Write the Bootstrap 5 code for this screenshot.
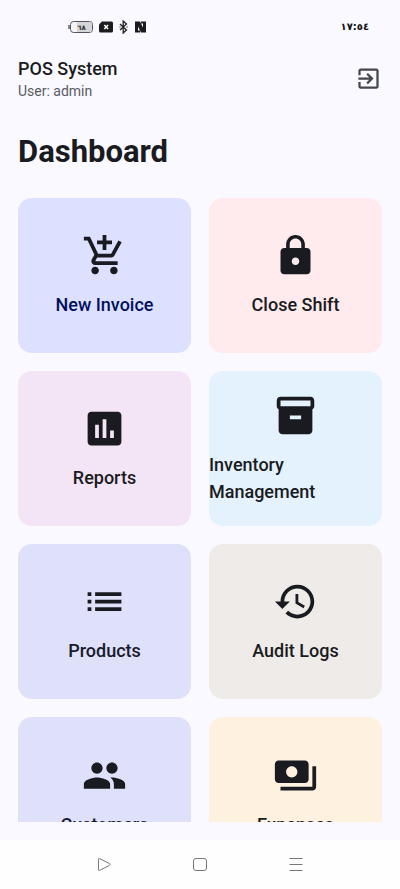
<!DOCTYPE html>
<html lang="en">
<head>
<meta charset="utf-8">
<meta name="viewport" content="width=device-width, initial-scale=1">
<title>POS System</title>
<link href="https://cdn.jsdelivr.net/npm/bootstrap@5.3.0/dist/css/bootstrap.min.css" rel="stylesheet">
<style>
  body { background: #f9f9ff; color: #1a1b21; font-family: Roboto, "Noto Sans", sans-serif; }
  .status-bar { padding: 20px 31px 0 68px; height: 33px; }
  .clock { font: 700 10px/14px "DejaVu Sans", sans-serif; color: #111; }
  .top-bar { padding: 23px 18px 0; }
  .brand { font-size: 18px; line-height: 26px; font-weight: 500; }
  .user-line { font-size: 14px; line-height: 18px; color: #5a5b62; }
  .exit-btn { color: #44464f; line-height: 0; }
  .page-title { font-size: 31px; line-height: 40px; font-weight: 700; padding: 32px 18px 26px; }
  .tile-scroll { min-height: 0; overflow-y: auto; scrollbar-width: none; margin: 0 18px 18px; }
  .tile-scroll::-webkit-scrollbar { display: none; }
  .tile-grid { gap: 18px; grid-template-columns: 1fr 1fr; }
  .tile { aspect-ratio: 1.115; border-radius: 14px; gap: 13px; color: #1a1b21; min-width: 0; }
  .tile svg { width: 45px; height: 45px; flex: none; }
  .tile-label { font-size: 18px; line-height: 27px; font-weight: 500; }
  .bg-indigo-soft { background: #dde0ff; }
  .bg-indigo-soft .tile-label { color: #00105c; }
  .bg-red-soft { background: #ffebee; }
  .bg-purple-soft { background: #f3e5f5; }
  .bg-blue-soft { background: #e3f2fd; }
  .bg-lavender { background: #dfe0f9; }
  .bg-lavender .tile-label { color: #181a2c; }
  .bg-stone { background: #efebe9; }
  .bg-orange-soft { background: #fff1df; }
  .nav-keys { height: 49px; padding: 0 14%; background: #fefefe; color: #77787c; }
  .nav-keys button { color: inherit; line-height: 0; }
</style>
</head>
<body class="vh-100 d-flex flex-column overflow-hidden">

<div class="status-bar d-flex justify-content-between align-items-center flex-shrink-0">
  <div class="d-flex align-items-center">
    <svg width="80" height="14" viewBox="0 0 80 14" role="img" aria-label="Battery 68 percent, no SIM, Bluetooth, NFC">
      <rect x="2.5" y="1.5" width="22" height="11" rx="3" fill="#f4f4f8" stroke="#55565b"/>
      <path d="M9 2h13a2 2 0 0 1 2 2v6a2 2 0 0 1-2 2H9z" fill="#d5d5da"/>
      <path d="M1 5v4" stroke="#55565b" stroke-width="1.4"/>
      <text x="13.5" y="9.500" text-anchor="middle" font-family="DejaVu Sans" font-size="7" font-weight="700" fill="#333">٦٨</text>
      <path d="M34 1.500h9.500q1.500 0 1.500 1.500v8q0 1.500-1.500 1.500h-11q-1.500 0-1.500-1.500V4.500z" fill="#1c1c1f"/>
      <path d="M36.300 5l3.800 4m0-4l-3.800 4" stroke="#fff" stroke-width="1.500"/>
      <path d="M52 4l6.500 6L55.200 13V1l3.300 3L52 10" fill="none" stroke="#222" stroke-width="1.300"/>
      <path d="M51.500 7h1M58.500 7h1.200" stroke="#222" stroke-width="1.200"/>
      <path d="M67 1.500h5l3 6V3.500h-2v-2h5v11h-5l-3-6v4h2v2h-5z" fill="#1c1c1f"/>
    </svg>
  </div>
  <div class="clock" dir="ltr">١٧:٥٤</div>
</div>

<header class="top-bar d-flex justify-content-between align-items-center flex-shrink-0">
  <div>
    <div class="brand">POS System</div>
    <div class="user-line">User: admin</div>
  </div>
  <button type="button" class="exit-btn btn p-0 border-0" aria-label="Log out">
    <svg width="27" height="27" viewBox="0 0 24 24" fill="currentColor"><path d="M10.090 15.590L11.500 17l5-5-5-5-1.410 1.410L12.670 11H3v2h9.670l-2.580 2.590zM19 3H5c-1.110 0-2 .9-2 2v4h2V5h14v14H5v-4H3v4c0 1.100.89 2 2 2h14c1.100 0 2-.9 2-2V5c0-1.100-.9-2-2-2z"/></svg>
  </button>
</header>

<h1 class="page-title m-0 flex-shrink-0">Dashboard</h1>

<main class="tile-scroll flex-grow-1">
  <div class="tile-grid d-grid">
    <button type="button" class="tile bg-indigo-soft border-0 p-0 d-flex flex-column align-items-center justify-content-center">
      <svg viewBox="0 0 24 24" fill="currentColor" aria-hidden="true"><path d="M11 9h2V6h3V4h-3V1h-2v3H8v2h3v3zm-4 9c-1.100 0-1.990.9-1.990 2S5.900 22 7 22s2-.9 2-2-.9-2-2-2zm10 0c-1.100 0-1.990.9-1.990 2s.89 2 1.990 2 2-.9 2-2-.9-2-2-2zm-9.830-3.250l.03-.12.9-1.630h7.450c.75 0 1.410-.41 1.750-1.030l3.860-7.010L19.420 4h-.01l-1.100 2-2.760 5H8.530l-.13-.27L6.160 6l-.95-2-.94-2H1v2h2l3.600 7.590-1.350 2.450c-.16.28-.25.61-.25.96 0 1.100.9 2 2 2h12v-2H7.420c-.13 0-.25-.11-.25-.25z"/></svg>
      <span class="tile-label text-start">New Invoice</span>
    </button>
    <button type="button" class="tile bg-red-soft border-0 p-0 d-flex flex-column align-items-center justify-content-center">
      <svg viewBox="0 0 24 24" fill="currentColor" aria-hidden="true"><path d="M18 8h-1V6c0-2.760-2.240-5-5-5S7 3.240 7 6v2H6c-1.100 0-2 .9-2 2v10c0 1.100.9 2 2 2h12c1.100 0 2-.9 2-2V10c0-1.100-.9-2-2-2zm-6 9c-1.100 0-2-.9-2-2s.9-2 2-2 2 .9 2 2-.9 2-2 2zm3.100-9H8.900V6c0-1.710 1.390-3.100 3.100-3.100 1.710 0 3.100 1.390 3.100 3.100v2z"/></svg>
      <span class="tile-label text-start">Close Shift</span>
    </button>
    <button type="button" class="tile bg-purple-soft border-0 p-0 d-flex flex-column align-items-center justify-content-center">
      <svg viewBox="0 0 24 24" fill="currentColor" aria-hidden="true"><path d="M19 3H5c-1.100 0-2 .9-2 2v14c0 1.100.9 2 2 2h14c1.100 0 2-.9 2-2V5c0-1.100-.9-2-2-2zM9 17H7v-7h2v7zm4 0h-2V7h2v10zm4 0h-2v-4h2v4z"/></svg>
      <span class="tile-label text-start">Reports</span>
    </button>
    <button type="button" class="tile bg-blue-soft border-0 p-0 d-flex flex-column align-items-center justify-content-center">
      <svg viewBox="0 0 24 24" fill="currentColor" aria-hidden="true"><path d="M20 2H4c-1 0-2 .9-2 2v3.010c0 .72.43 1.340 1 1.690V20c0 1.100 1.100 2 2 2h14c.9 0 2-.9 2-2V8.700c.57-.35 1-.97 1-1.690V4c0-1.100-1-2-2-2zm-5 12H9v-2h6v2zm5-7H4V4h16v3z"/></svg>
      <span class="tile-label text-start">Inventory Management</span>
    </button>
    <button type="button" class="tile bg-lavender border-0 p-0 d-flex flex-column align-items-center justify-content-center">
      <svg viewBox="0 0 24 24" fill="currentColor" aria-hidden="true"><path d="M3 13h2v-2H3v2zm0 4h2v-2H3v2zm0-8h2V7H3v2zm4 4h14v-2H7v2zm0 4h14v-2H7v2zM7 7v2h14V7H7z"/></svg>
      <span class="tile-label text-start">Products</span>
    </button>
    <button type="button" class="tile bg-stone border-0 p-0 d-flex flex-column align-items-center justify-content-center">
      <svg viewBox="0 0 24 24" fill="currentColor" aria-hidden="true"><path d="M13 3c-4.970 0-9 4.030-9 9H1l3.890 3.890.07.14L9 12H6c0-3.870 3.130-7 7-7s7 3.130 7 7-3.130 7-7 7c-1.930 0-3.680-.79-4.940-2.060l-1.420 1.420C8.270 19.990 10.510 21 13 21c4.970 0 9-4.030 9-9s-4.030-9-9-9zm-1 5v5l4.280 2.540.72-1.210-3.500-2.080V8H12z"/></svg>
      <span class="tile-label text-start">Audit Logs</span>
    </button>
    <button type="button" class="tile bg-lavender border-0 p-0 d-flex flex-column align-items-center justify-content-center">
      <svg viewBox="0 0 24 24" fill="currentColor" aria-hidden="true"><path d="M16 11c1.660 0 2.990-1.340 2.990-3S17.660 5 16 5c-1.660 0-3 1.340-3 3s1.340 3 3 3zm-8 0c1.660 0 2.990-1.340 2.990-3S9.660 5 8 5C6.340 5 5 6.340 5 8s1.340 3 3 3zm0 2c-2.330 0-7 1.170-7 3.500V19h14v-2.500c0-2.330-4.670-3.500-7-3.500zm8 0c-.29 0-.62.02-.97.05 1.160.84 1.970 1.970 1.970 3.450V19h6v-2.500c0-2.330-4.670-3.500-7-3.500z"/></svg>
      <span class="tile-label text-start">Customers</span>
    </button>
    <button type="button" class="tile bg-orange-soft border-0 p-0 d-flex flex-column align-items-center justify-content-center">
      <svg viewBox="0 0 24 24" fill="currentColor" aria-hidden="true"><path d="M19 14V6c0-1.100-.9-2-2-2H3c-1.100 0-2 .9-2 2v8c0 1.100.9 2 2 2h14c1.100 0 2-.9 2-2zm-9-1c-1.660 0-3-1.340-3-3s1.340-3 3-3 3 1.340 3 3-1.340 3-3 3zm13-6v11c0 1.100-.9 2-2 2H4v-2h17V7h2z"/></svg>
      <span class="tile-label text-start">Expenses</span>
    </button>
  </div>
</main>

<nav class="nav-keys d-flex justify-content-around align-items-center flex-shrink-0" aria-label="System navigation">
  <button type="button" class="btn p-0 border-0" aria-label="Back">
    <svg width="16" height="16" viewBox="0 0 16 16" fill="none" stroke="currentColor"><path d="M2.500 2.200v10.600q0 1.200 1.100.6l10-5.100q1.300-.8 0-1.600l-10-5.100q-1.100-.6-1.100.6z"/></svg>
  </button>
  <button type="button" class="btn p-0 border-0" aria-label="Home">
    <svg width="16" height="16" viewBox="0 0 16 16" fill="none" stroke="currentColor"><rect x="1.500" y="1.500" width="13" height="12" rx="2.500"/></svg>
  </button>
  <button type="button" class="btn p-0 border-0" aria-label="Recent apps">
    <svg width="16" height="16" viewBox="0 0 16 16" fill="none" stroke="currentColor"><path d="M1.500 1.500h13M1.500 7.500h13M1.500 13.500h13"/></svg>
  </button>
</nav>

<script src="https://cdn.jsdelivr.net/npm/bootstrap@5.3.0/dist/js/bootstrap.bundle.min.js"></script>
</body>
</html>
